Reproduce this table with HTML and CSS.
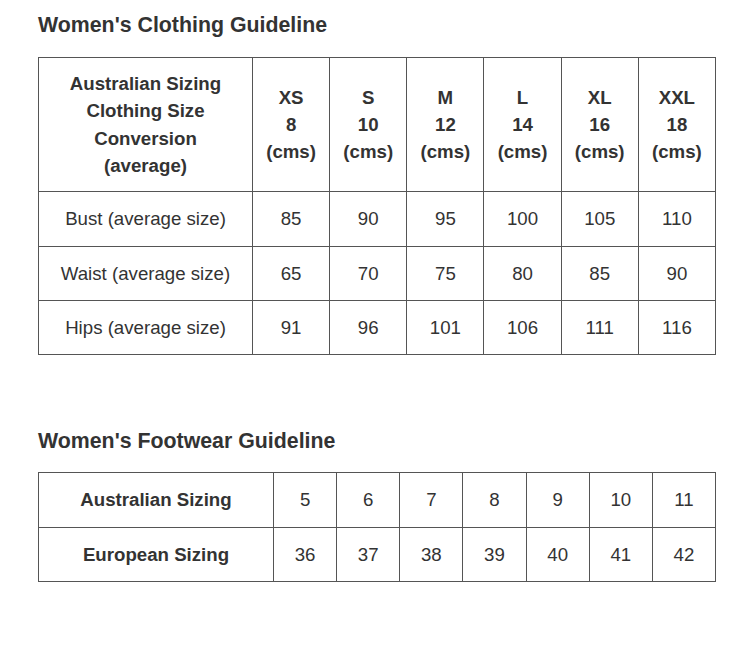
FILE: index.html
```html
<!DOCTYPE html>
<html>
<head>
<meta charset="utf-8">
<link rel="stylesheet" href="styles.css">
</head>
<body>
<div class="page">
  <h2 class="title">Women's Clothing Guideline</h2>
  <table class="grid clothing">
    <colgroup><col class="c-first"><col><col><col><col><col><col></colgroup>
    <tr class="head">
      <th>Australian Sizing<br>Clothing Size<br>Conversion<br>(average)</th>
      <th>XS<br>8<br>(cms)</th>
      <th>S<br>10<br>(cms)</th>
      <th>M<br>12<br>(cms)</th>
      <th>L<br>14<br>(cms)</th>
      <th>XL<br>16<br>(cms)</th>
      <th>XXL<br>18<br>(cms)</th>
    </tr>
    <tr><td>Bust (average size)</td><td>85</td><td>90</td><td>95</td><td>100</td><td>105</td><td>110</td></tr>
    <tr><td>Waist (average size)</td><td>65</td><td>70</td><td>75</td><td>80</td><td>85</td><td>90</td></tr>
    <tr><td>Hips (average size)</td><td>91</td><td>96</td><td>101</td><td>106</td><td>111</td><td>116</td></tr>
  </table>

  <h2 class="title second">Women's Footwear Guideline</h2>
  <table class="grid footwear">
    <colgroup><col class="f-first"><col><col><col><col><col><col><col></colgroup>
    <tr><th>Australian Sizing</th><td>5</td><td>6</td><td>7</td><td>8</td><td>9</td><td>10</td><td>11</td></tr>
    <tr><th>European Sizing</th><td>36</td><td>37</td><td>38</td><td>39</td><td>40</td><td>41</td><td>42</td></tr>
  </table>
</div>
</body>
</html>
```

FILE: styles.css
```css
html, body {
  margin: 0;
  padding: 0;
  background: #ffffff;
}
body {
  font-family: "Liberation Sans", Arial, sans-serif;
  color: #333333;
}
.page {
  padding: 13px 38px 0 38px;
}
.title {
  margin: 0;
  font-size: 21.33px;
  line-height: 24px;
  font-weight: bold;
  color: #333333;
}
.title.second {
  margin-top: 74px;
}
.grid {
  width: 678px;
  border-collapse: collapse;
  table-layout: fixed;
  font-size: 18.67px;
  line-height: 27.33px;
}
.clothing {
  margin-top: 20px;
}
.footwear {
  margin-top: 19px;
}
.grid th,
.grid td {
  border: 1px solid #555555;
  padding: 13px 4px;
  text-align: center;
  vertical-align: middle;
}
.grid .head th {
  padding: 12px 4px;
}
.grid th {
  font-weight: bold;
}
.c-first {
  width: 214px;
}
.f-first {
  width: 235px;
}
```
